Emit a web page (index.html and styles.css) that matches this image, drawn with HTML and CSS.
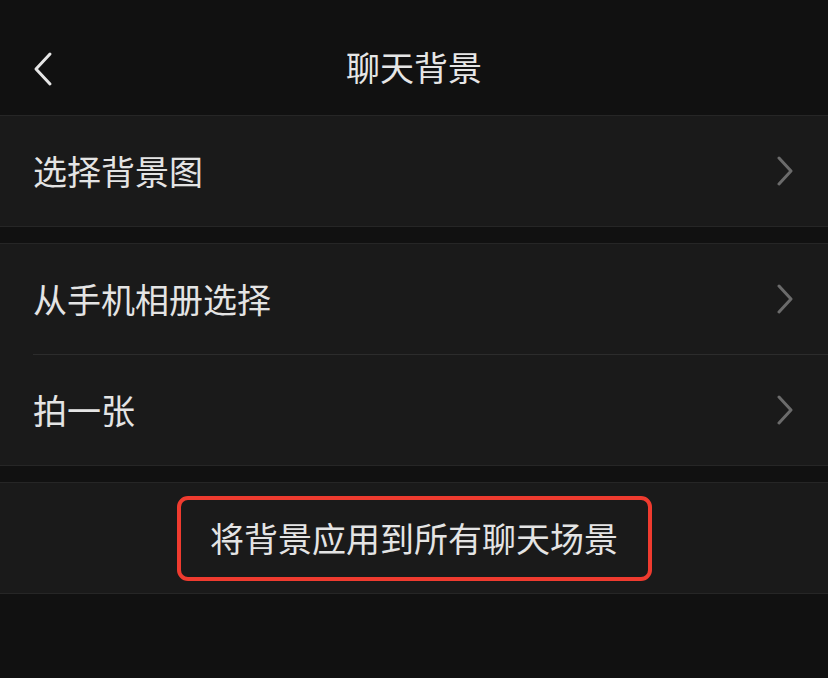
FILE: index.html
```html
<!DOCTYPE html>
<html lang="zh">
<head>
<meta charset="utf-8">
<link rel="stylesheet" href="styles.css">
</head>
<body>
<div class="page">
  <header class="nav">
    <span class="back">
      <svg width="24" height="36" viewBox="0 0 24 36"><path d="M19 3 L5 18 L19 33" fill="none" stroke="#e6e6e6" stroke-width="3" stroke-linecap="round" stroke-linejoin="round"/></svg>
    </span>
    <h1 class="title">聊天背景</h1>
  </header>
  <section class="group">
    <div class="row"><span class="label">选择背景图</span><span class="chev"><svg width="18" height="30" viewBox="0 0 18 30"><path d="M3 2 L15 15 L3 28" fill="none" stroke="#6b6b6b" stroke-width="3" stroke-linecap="round" stroke-linejoin="round"/></svg></span></div>
  </section>
  <section class="group">
    <div class="row"><span class="label">从手机相册选择</span><span class="chev"><svg width="18" height="30" viewBox="0 0 18 30"><path d="M3 2 L15 15 L3 28" fill="none" stroke="#6b6b6b" stroke-width="3" stroke-linecap="round" stroke-linejoin="round"/></svg></span></div>
    <div class="row"><span class="label">拍一张</span><span class="chev"><svg width="18" height="30" viewBox="0 0 18 30"><path d="M3 2 L15 15 L3 28" fill="none" stroke="#6b6b6b" stroke-width="3" stroke-linecap="round" stroke-linejoin="round"/></svg></span></div>
  </section>
  <section class="group">
    <div class="row center"><span class="apply">将背景应用到所有聊天场景</span></div>
  </section>
</div>
</body>
</html>
```
FILE: styles.css
```css
html, body {
  margin: 0;
  padding: 0;
  background: #111111;
}
body {
  font-family: "Noto Sans CJK SC", "Noto Sans", sans-serif;
  color: #e4e4e4;
}
.page {
  width: 828px;
  height: 678px;
  background: #111111;
  overflow: hidden;
}
.nav {
  position: relative;
  height: 115px;
  display: flex;
  align-items: center;
  justify-content: center;
  border-bottom: 1px solid #262626;
}
.back {
  position: absolute;
  left: 31px;
  top: 51px;
  width: 24px;
  height: 36px;
  display: block;
}
.back svg { display: block; }
.title {
  margin: 0;
  font-size: 34px;
  font-weight: normal;
  line-height: 1;
  letter-spacing: 0;
  color: #e6e6e6;
  padding-top: 18px;
}
.group {
  background: #1a1a1a;
  border-bottom: 1px solid #262626;
  margin-bottom: 16px;
}
.group + .group {
  border-top: 1px solid #262626;
}
.row {
  height: 110px;
  margin-left: 33px;
  padding-right: 34px;
  display: flex;
  align-items: center;
  justify-content: space-between;
}
.row + .row {
  border-top: 1px solid #2c2c2c;
}
.label {
  font-size: 34px;
  line-height: 1;
  color: #e4e4e4;
}
.chev svg { display: block; }
.row.center {
  margin-left: 0;
  padding-right: 0;
  justify-content: center;
}
.apply {
  display: flex;
  align-items: center;
  justify-content: center;
  width: 467px;
  height: 77px;
  border: 4px solid #ef3b2f;
  border-radius: 11px;
  font-size: 34px;
  line-height: 1;
  color: #e4e4e4;
}
```
